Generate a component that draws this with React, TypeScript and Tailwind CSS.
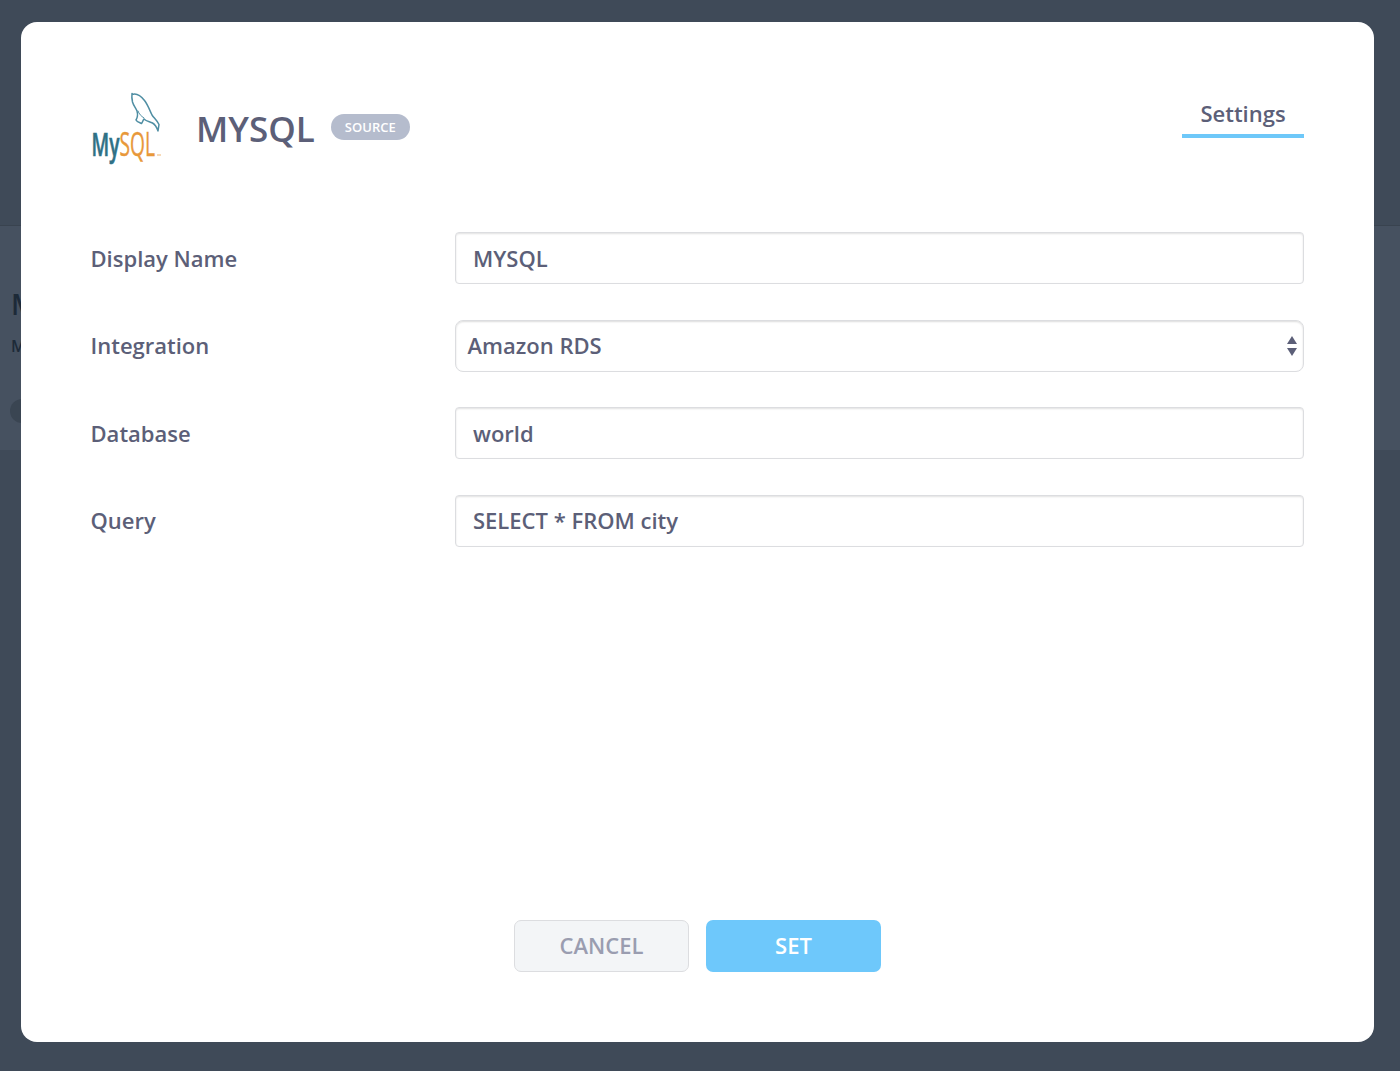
function MysqlLogo() {
  return (
    <svg className="overflow-visible" width="72" height="72" viewBox="0 0 72 72" fill="none">
      {/* dolphin */}
      <path
        d="M41 4.500c4-1.500 9 1.500 12.500 6 3.500 4.500 5 9.500 7.500 14.500 2 3 5 5.500 7 9.500l-1 6.500c-1-3-2-6-5.500-8-3-1.500-6-1.500-8.500-4-1.500 2-1.500 3.500-2.500 4.500-2-1-4.500-1.500-5.500-3.500 1.500-2.500 2-5.500 1-9-1.500-3.500-3.500-5.500-4.500-9-.5-2.500-1-5-.5-8.500z"
        stroke="#4f8ea3"
        strokeWidth="1.500"
        strokeLinejoin="round"
      />
      <path d="M47 21c1 3 3 5 6 7" stroke="#4f8ea3" strokeWidth="1" strokeLinecap="round" />
      <text transform="translate(0.500 66) scale(0.6 1)" fontFamily="'Open Sans', sans-serif" fontSize="32">
        <tspan fill="#2f7186" stroke="#2f7186" strokeWidth="0.600" fontWeight="600">My</tspan>
        <tspan fill="#e8983a" stroke="#e8983a" strokeWidth="0.400" fontWeight="500">SQL</tspan>
      </text>
      <circle cx="67" cy="65" r="0.700" fill="#e8983a" />
      <circle cx="69" cy="65" r="0.700" fill="#e8983a" />
    </svg>
  );
}

function FieldRow({ label, children }: { label: string; children: React.ReactNode }) {
  return (
    <div className="flex items-center h-[52px]">
      <div className="w-[364.5px] shrink-0 text-[22px] font-semibold text-[#5c5f78]">{label}</div>
      {children}
    </div>
  );
}

function TextField({ value }: { value: string }) {
  return (
    <div className="flex-1 h-[52px] flex items-center pl-[17px] bg-white border-[1.500px] border-[#dcdde0] shadow-[inset_0_1px_2px_rgba(0,0,0,0.12)] rounded-[4px] text-[22px] font-semibold text-[#5c5f78]">
      {value}
    </div>
  );
}

export default function App() {
  return (
    <div className="relative h-[1071px] overflow-hidden bg-[#3f4a58] font-['Open_Sans',sans-serif]">
      {/* page behind the modal */}
      <div className="h-[225px]"></div>
      <div className="h-[225px] bg-[#465160] border-t border-[#39434f] pl-[11px] text-[#1d2a38]">
        <div className="pt-[56px] text-[28px] leading-[44px] font-semibold">M</div>
        <div className="mt-[8px] text-[16px] font-semibold">M</div>
        <div className="mt-[41px] -ml-[1px] w-[40px] h-[24px] rounded-full bg-[#3a4552]"></div>
      </div>

      {/* modal */}
      <div className="absolute left-[20.5px] top-[22px] w-[1353.5px] h-[1020px] bg-white rounded-[16px] pl-[70px] pr-[70px] flex flex-col">
        <div className="flex items-start h-[210px]">
          <div className="mt-[68px] shrink-0">
            <MysqlLogo />
          </div>
          <div className="ml-[33.5px] mt-[82px] text-[35px] leading-[50px] font-semibold text-[#5c5f78]">MYSQL</div>
          <div className="ml-[16px] mt-[92px] w-[79px] h-[26px] pt-[2px] rounded-full bg-[#b5bccd] flex items-center justify-center text-[13px] font-semibold text-white">
            SOURCE
          </div>
          <div className="ml-auto mt-[74px] w-[122px] h-[42px] border-b-4 border-[#6ec8f9] text-center text-[22px] leading-[35px] font-semibold text-[#5c5f78]">
            Settings
          </div>
        </div>

        <div className="flex flex-col gap-[35.5px]">
          <FieldRow label="Display Name">
            <TextField value="MYSQL" />
          </FieldRow>
          <FieldRow label="Integration">
            <div className="flex-1 h-[52px] flex items-center justify-between pl-[11.5px] pr-[5px] bg-white border-[1.500px] border-[#dcdde0] shadow-[inset_0_1px_2px_rgba(0,0,0,0.14)] rounded-[8px] text-[22px] font-semibold text-[#5c5f78]">
              <span>Amazon RDS</span>
              <svg width="12" height="22" viewBox="0 0 12 22" fill="#5c5f78">
                <path d="M6 1l5 8H1z" />
                <path d="M1 13h10l-5 8z" />
              </svg>
            </div>
          </FieldRow>
          <FieldRow label="Database">
            <TextField value="world" />
          </FieldRow>
          <FieldRow label="Query">
            <TextField value="SELECT * FROM city" />
          </FieldRow>
        </div>

        <div className="mt-[373px] ml-[423.5px] flex gap-[17px]">
          <button className="w-[175px] h-[52px] rounded-[7px] bg-[#f3f5f7] border-[1.500px] border-[#dcdde0] text-[22px] font-semibold text-[#9a9db0]">
            CANCEL
          </button>
          <button className="w-[175px] h-[52px] rounded-[7px] bg-[#6ec8fb] text-[22px] font-semibold text-white">SET</button>
        </div>
      </div>
    </div>
  );
}
